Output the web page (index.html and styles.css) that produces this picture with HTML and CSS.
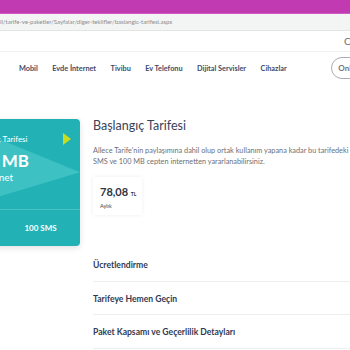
FILE: index.html
```html
<!DOCTYPE html>
<html>
<head>
<meta charset="utf-8">
<title>Başlangıç Tarifesi</title>
<link rel="stylesheet" href="styles.css">
</head>
<body>

<div class="chrome"></div>
<div class="urlbar">il/tarife-ve-paketler/Sayfalar/diger-teklifler/baslangic-tarifesi.aspx</div>
<div class="topbar"><span class="toplink">Canlı Destek</span></div>

<div class="nav">
	<a class="navlink">Mobil</a>
	<a class="navlink">Evde İnternet</a>
	<a class="navlink">Tivibu</a>
	<a class="navlink">Ev Telefonu</a>
	<a class="navlink">Dijital Servisler</a>
	<a class="navlink">Cihazlar</a>
	<a class="online">Online İşlemler</a>
</div>

<div class="main">
	<div class="card">
		<div class="card-top">
			<div class="card-head">
				<span class="card-name">Başlangıç Tarifesi</span>
				<span class="play"></span>
			</div>
			<div class="card-big">100 MB</div>
			<div class="card-sub">İnternet</div>
		</div>
		<div class="card-bottom">
			<span class="card-cell">100 DK</span>
			<span class="card-cell">100 SMS</span>
		</div>
	</div>

	<div class="content">
		<h1 class="title">Başlangıç Tarifesi</h1>
		<p class="desc">Allece Tarife'nin paylaşımına dahil olup ortak kullanım yapana kadar bu tarifedeki 100 dakika, 100<br>SMS ve 100 MB cepten internetten yararlanabilirsiniz.</p>
		<div class="price">
			<div class="amount">78,08 <span class="cur">TL</span></div>
			<div class="period">Aylık</div>
		</div>

		<div class="acc">
			<div class="acc-row">Ücretlendirme</div>
			<div class="acc-row">Tarifeye Hemen Geçin</div>
			<div class="acc-row">Paket Kapsamı ve Geçerlilik Detayları</div>
		</div>
	</div>
</div>

</body>
</html>
```

FILE: styles.css
```css
body{
	margin:0;
	width:350px;
	height:350px;
	overflow:hidden;
	font-family:Lato, "Open Sans", sans-serif;
	background:#fff;
}
.chrome{
	height:14px;
	background:#c13ab2;
	border-bottom:1px solid #cf5cc3;
	box-sizing:border-box;
}
.urlbar{
	height:17px;
	line-height:16px;
	background:#f3f4f4;
	border-bottom:1px solid #e3e5e5;
	box-sizing:border-box;
	font-size:6px;
	color:#8a8d90;
	white-space:nowrap;
}
.topbar{
	height:21px;
	line-height:20px;
	border-bottom:1px solid #eff0f2;
	box-sizing:border-box;
	padding-left:344px;
	white-space:nowrap;
	font-size:10px;
	color:#6b6f75;
}
.nav{
	display:flex;
	align-items:center;
	height:32px;
	padding-left:19px;
	white-space:nowrap;
}
.navlink{
	font-size:7.3px;
	font-weight:700;
	color:#3e4b68;
	margin-right:14.5px;
}
.online{
	margin-left:auto;
	margin-right:-53px;
	font-size:8px;
	font-weight:700;
	color:#6f7482;
	border:1px solid #a9adb5;
	border-radius:11px;
	padding:5px 10px 5px 6px;
}
.main{
	display:flex;
	margin-top:34px;
}
.card{
	position:relative;
	flex:none;
	width:130px;
	height:127px;
	margin-left:-50px;
	margin-top:1px;
	border-radius:4px;
	background:#22b2b6;
	box-shadow:0 2px 6px rgba(0,0,0,.12);
	color:#fff;
	overflow:hidden;
}
.card:before{
	content:"";
	position:absolute;
	left:0;
	top:0;
	width:130px;
	height:92px;
	background:#3ec1c3;
	clip-path:polygon(0 0, 100% 58%, 0 100%);
}
.card-top{
	position:relative;
	height:91px;
	border-bottom:1px solid rgba(255,255,255,.18);
	padding:14px 0 0 18px;
	box-sizing:border-box;
}
.card-head{
	display:flex;
	align-items:center;
}
.card-name{
	font-size:8px;
}
.play{
	margin-left:35px;
	width:0;
	height:0;
	border-top:6px solid transparent;
	border-bottom:6px solid transparent;
	border-left:8px solid #c9dd1c;
}
.card-big{
	font-size:17px;
	font-weight:700;
	margin-top:6px;
	line-height:20px;
}
.card-sub{
	font-size:10px;
	line-height:12px;
	margin-left:10px;
}
.card-bottom{
	position:relative;
	display:flex;
	height:35px;
	align-items:center;
	font-size:8px;
	font-weight:700;
}
.card-cell{
	margin-left:8px;
}
.card-cell + .card-cell{
	margin-left:39px;
}
.content{
	margin-left:13px;
	width:320px;
	flex:none;
}
.title{
	margin:0;
	font-size:12.5px;
	font-weight:400;
	color:#3b4256;
	line-height:16px;
}
.desc{
	margin:11px 0 0;
	font-size:7.3px;
	line-height:11px;
	color:#6c7078;
	white-space:nowrap;
}
.price{
	margin-top:10px;
	width:49px;
	height:38px;
	box-sizing:border-box;
	padding:8px 0 0 7px;
	box-shadow:0 0 4px rgba(0,0,0,.07);
	color:#2e3440;
}
.amount{
	font-size:11px;
	font-weight:700;
	line-height:13px;
}
.cur{
	font-size:5px;
}
.period{
	font-size:5.5px;
	margin-top:2px;
	color:#444;
}
.acc{
	margin-top:33px;
}
.acc-row{
	height:33.5px;
	line-height:34px;
	box-sizing:border-box;
	border-bottom:1px solid #eceef1;
	font-size:8.6px;
	font-weight:700;
	color:#313a52;
	white-space:nowrap;
}
```
